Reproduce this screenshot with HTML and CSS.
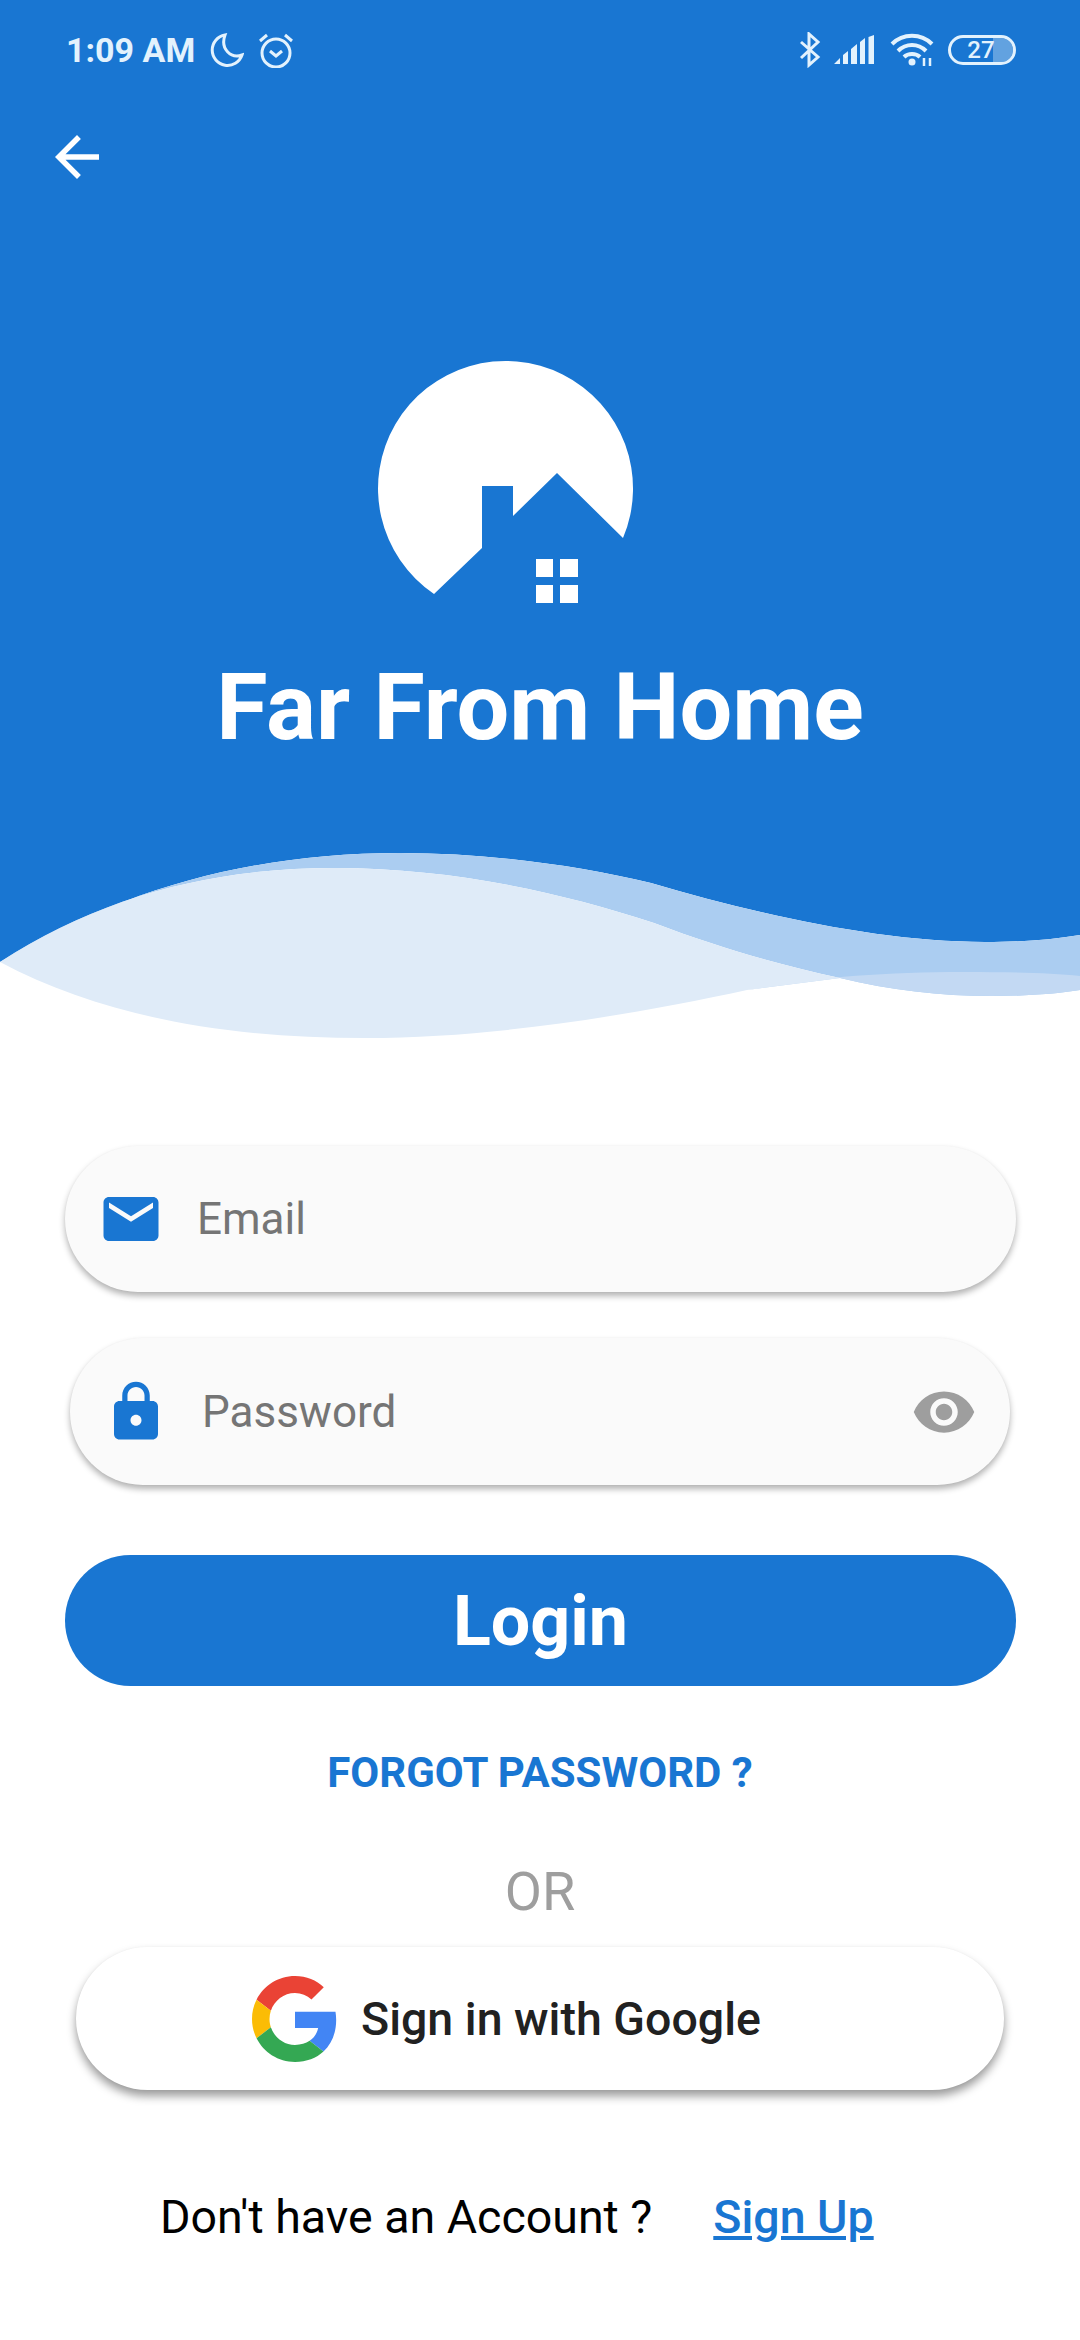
FILE: index.html
```html
<!DOCTYPE html>
<html lang="en">

<head>
  <meta charset="UTF-8">
  <title>Far From Home</title>
  <link rel="stylesheet" href="styles.css">
</head>

<body>
  <div id="hero">
    <div class="status">
      <div class="status-left">
        <span class="time">1:09 AM</span>
        <svg class="moon" width="34" height="36" viewBox="0 0 34 36">
          <path d="M15 3A15.3 15.3 0 1 0 32 23C21 27 10 17 15 3Z" />
        </svg>
        <svg class="alarm" width="38" height="36" viewBox="0 0 38 36">
          <circle cx="19" cy="21" r="14" />
          <path d="M3 9L10 3M35 9L28 3M13 19L19 24L25 19" />
        </svg>
      </div>
      <div class="status-right">
        <svg class="bt" width="24" height="36" viewBox="0 0 24 36">
          <path d="M3 10L20 25L11 33V2L20 10L3 26" />
        </svg>
        <svg class="signal" width="41" height="30" viewBox="0 0 41 30">
          <path d="M0 29L6 23V29ZM9 29V20L14 16V29ZM17 29V14L23 9V29ZM26 29V7L31 3V29ZM34.500 29V2L40 0V29Z" />
        </svg>
        <svg class="wifi" width="44" height="34" viewBox="0 0 44 34">
          <path d="M2 11C13 0 31 0 42 11M8 18C16 10 28 10 36 18M14 24C18 20 26 20 30 24" />
          <circle class="wifi-dot" cx="22" cy="29" r="3.500" />
          <path class="wifi-arrows" d="M34 25V33M40 25V33" />
        </svg>
        <div class="battery">
          <div class="battery-fill"></div>
          <span>27</span>
        </div>
      </div>
    </div>
    <svg class="back" width="66" height="66" viewBox="0 0 24 24">
      <path d="M20 11H7.830l5.590-5.590L12 4l-8 8 8 8 1.410-1.410L7.830 13H20v-2z" />
    </svg>
    <svg class="logo" width="340" height="260" viewBox="370 350 340 260">
      <path class="logo-moon" d="M434 594A127.500 127.500 0 1 1 623 538L557 473L513 516V486H482V548Z" />
      <path class="logo-moon" d="M536 559H553V577H536ZM560 559H578V577H560ZM536 585H553V603H536ZM560 585H578V603H560Z" />
    </svg>
    <h1 class="title">Far From Home</h1>
  </div>

  <!-- y coords in the viewBox are the page coords -->
  <svg class="wave" width="1080" height="210" viewBox="0 840 1080 210">
    <path class="wave-blue" d="M0 840H1080V935C1050 940 1020 942 985 942C880 942 760 915 651 883C580 866 490 853 400 853C250 853 120 890 0 962Z" />
    <path class="wave-back" d="M0 962C120 890 250 853 400 853C490 853 580 866 651 883C760 915 880 942 985 942C1020 942 1050 940 1080 935V990C1055 994 1025 996 992 996C940 996 890 990 840 978C780 965 720 948 654 923C560 892 450 868 335 868C210 868 100 897 0 962Z" />
    <path class="wave-mid" d="M840 978C890 990 940 996 992 996C1025 996 1055 994 1080 990V976C1050 973 1010 972 964 972C880 972 810 978 747 990Z" />
    <path class="wave-front" d="M0 962C100 897 210 868 335 868C450 868 560 892 654 923C720 948 780 965 840 978L747 990C640 1013 500 1038 365 1038C220 1038 100 1015 0 962Z" />
  </svg>

  <div id="form">
    <div class="field field-email">
      <svg class="field-icon" width="66" height="66" viewBox="0 0 24 24">
        <path d="M20 4H4c-1.100 0-2 .9-2 2v12c0 1.100.9 2 2 2h16c1.100 0 2-.9 2-2V6c0-1.100-.9-2-2-2zm0 4l-8 5-8-5V6l8 5 8-5v2z" />
      </svg>
      <span class="hint">Email</span>
    </div>
    <div class="field field-pass">
      <svg class="field-icon" width="66" height="66" viewBox="0 0 24 24">
        <path d="M18 8h-1V6c0-2.760-2.240-5-5-5S7 3.240 7 6v2H6c-1.100 0-2 .9-2 2v10c0 1.100.9 2 2 2h12c1.100 0 2-.9 2-2V10c0-1.100-.9-2-2-2zm-6 9c-1.100 0-2-.9-2-2s.9-2 2-2 2 .9 2 2-.9 2-2 2zm3.100-9H8.900V6c0-1.710 1.390-3.100 3.100-3.100 1.710 0 3.100 1.390 3.100 3.100v2z" />
      </svg>
      <span class="hint">Password</span>
      <svg class="eye" width="66" height="66" viewBox="0 0 24 24">
        <path d="M12 4.500C7 4.500 2.730 7.610 1 12c1.730 4.390 6 7.500 11 7.500s9.270-3.110 11-7.500c-1.730-4.390-6-7.500-11-7.500zM12 17c-2.760 0-5-2.240-5-5s2.240-5 5-5 5 2.240 5 5-2.240 5-5 5zm0-8c-1.660 0-3 1.340-3 3s1.340 3 3 3 3-1.340 3-3-1.340-3-3-3z" />
      </svg>
    </div>
    <div class="login">Login</div>
    <div class="forgot">FORGOT PASSWORD ?</div>
    <div class="or">OR</div>
    <div class="google">
      <svg width="86" height="86" viewBox="0 0 48 48">
        <path fill="#EA4335" d="M24 9.500c3.540 0 6.710 1.220 9.210 3.600l6.850-6.850C35.900 2.380 30.470 0 24 0 14.620 0 6.510 5.380 2.560 13.220l7.980 6.190C12.430 13.720 17.740 9.500 24 9.500z" />
        <path fill="#4285F4" d="M46.980 24.550c0-1.570-.15-3.090-.38-4.550H24v9.020h12.940c-.58 2.960-2.260 5.480-4.780 7.180l7.730 6c4.510-4.180 7.090-10.360 7.090-17.650z" />
        <path fill="#FBBC05" d="M10.530 28.590c-.48-1.450-.76-2.990-.76-4.590s.27-3.140.76-4.590l-7.980-6.190C.92 16.460 0 20.120 0 24c0 3.880.92 7.540 2.560 10.780l7.970-6.190z" />
        <path fill="#34A853" d="M24 48c6.480 0 11.930-2.130 15.890-5.810l-7.730-6c-2.150 1.450-4.920 2.300-8.160 2.300-6.260 0-11.570-4.220-13.470-9.910l-7.980 6.190C6.510 42.620 14.620 48 24 48z" />
      </svg>
      <span>Sign in with Google</span>
    </div>
    <div class="signup">
      <span>Don't have an Account ?</span>
      <a class="signup-link">Sign Up</a>
    </div>
  </div>
</body>

</html>
```

FILE: styles.css
```css
body {
  margin: 0;
  width: 1080px;
  height: 2340px;
  overflow: hidden;
  background: #fff;
  font-family: Roboto, sans-serif;
}

svg {
  display: block;
  flex: none;
}

#hero {
  height: 840px;
  background: #1976d2;
  display: flex;
  flex-direction: column;
}

.status {
  height: 36px;
  padding: 32px 64px 0 66px;
  display: flex;
  justify-content: space-between;
  align-items: center;
  color: #e3f2fd;
}

.status-left,
.status-right {
  display: flex;
  align-items: center;
}

.time {
  font-size: 34px;
  font-weight: 700;
}

.moon {
  margin-left: 15px;
}

.moon path,
.alarm circle,
.alarm path,
.bt path,
.wifi path {
  fill: none;
  stroke: #e3f2fd;
  stroke-width: 3;
}

.alarm {
  margin-left: 13px;
}

.bt {
  margin-right: 12px;
}

.signal {
  fill: #e3f2fd;
  margin-right: 15px;
}

.wifi {
  margin-right: 14px;
}

.wifi path {
  stroke-width: 4;
}

.wifi-dot {
  fill: #e3f2fd;
}

.wifi .wifi-arrows {
  stroke-width: 2.500;
}

.battery {
  position: relative;
  box-sizing: border-box;
  width: 68px;
  height: 30px;
  border: 3px solid #e3f2fd;
  border-radius: 15px;
  display: flex;
  align-items: center;
  justify-content: center;
  font-size: 24px;
  font-weight: 500;
  overflow: hidden;
}

.battery span {
  position: relative;
  margin-right: 2px;
}

.battery-fill {
  position: absolute;
  top: 0;
  right: 0;
  bottom: 0;
  width: 20px;
  border-radius: 0 12px 12px 0;
  background: rgba(255, 255, 255, .32);
}

.back {
  fill: #fff;
  margin: 56px 0 0 44px;
}

.logo {
  margin: 160px auto 0;
}

.logo-moon {
  fill: #fff;
}

.title {
  margin: 45px 0 0;
  text-align: center;
  color: #fff;
  font-size: 93.500px;
  line-height: 104px;
  font-weight: 700;
}

.wave-blue {
  fill: #1976d2;
}

.wave-back {
  fill: #abcdf1;
}

.wave-mid {
  fill: #c3d9f3;
}

.wave-front {
  fill: #dfebf8;
}

#form {
  display: flex;
  flex-direction: column;
  padding-top: 96px;
}

.field {
  box-sizing: border-box;
  height: 146px;
  border-radius: 73px;
  background: #fafafa;
  box-shadow: 0 4px 6px rgba(0, 0, 0, .3), 0 0 2px rgba(0, 0, 0, .03);
  display: flex;
  align-items: center;
}

.field-email {
  margin: 0 64px 0 65px;
  padding-left: 33px;
}

.field-pass {
  height: 147px;
  margin: 46px 70px 0;
  padding-left: 33px;
}

.field-icon {
  fill: #1976d2;
}

.field-email .hint {
  margin-left: 33px;
}

.field-pass .hint {
  margin-left: 33px;
}

.hint {
  color: #757575;
  font-size: 44px;
}

.eye {
  fill: #9e9e9e;
  margin-left: auto;
  margin-right: 33px;
}

.login {
  margin: 70px 64px 0 65px;
  height: 131px;
  border-radius: 66px;
  background: #1976d2;
  color: #fff;
  font-size: 70px;
  font-weight: 700;
  display: flex;
  align-items: center;
  justify-content: center;
}

.forgot {
  margin-top: 62px;
  line-height: 50px;
  text-align: center;
  color: #1976d2;
  font-size: 42px;
  font-weight: 700;
}

.or {
  margin-top: 64px;
  line-height: 60px;
  text-align: center;
  color: #9e9e9e;
  font-size: 54px;
}

.google {
  margin: 25px 76px 0;
  padding-left: 176px;
  height: 143px;
  border-radius: 72px;
  background: #fff;
  box-shadow: 0 6px 10px rgba(0, 0, 0, .4), 0 0 2px rgba(0, 0, 0, .03);
  display: flex;
  align-items: center;
  gap: 23px;
  color: #212121;
  font-size: 46.500px;
  font-weight: 500;
}

.signup {
  margin-top: 100px;
  padding-left: 160px;
  line-height: 54px;
  display: flex;
  gap: 61px;
  color: #000;
  font-size: 46.500px;
}

.signup-link {
  color: #1976d2;
  font-weight: 500;
  text-decoration: underline;
}
```
